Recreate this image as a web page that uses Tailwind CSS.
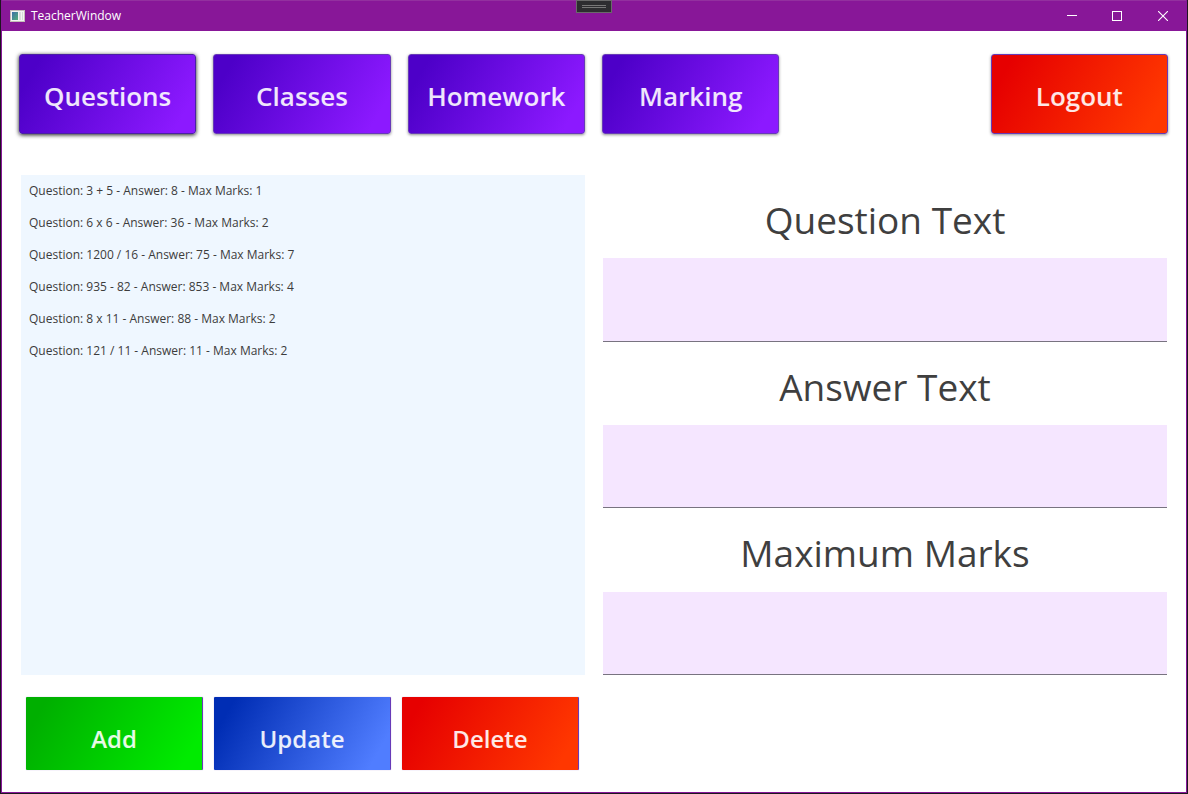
<!DOCTYPE html>
<html lang="en">
<head>
<meta charset="utf-8">
<title>TeacherWindow</title>
<script src="https://cdn.jsdelivr.net/npm/@tailwindcss/browser@4"></script>
</head>
<body class="bg-[#1e1420] font-['Segoe_UI','Open_Sans',sans-serif]">
<div class="flex min-h-screen flex-col px-px pb-px">
  <div class="flex flex-1 flex-col border-x border-b border-[#881798] bg-white">
    <header class="relative flex h-[31px] items-center border-t border-[#93309f] bg-[#881798] pl-2 text-white">
      <svg class="mr-[6px] shrink-0" width="15" height="12" viewBox="0 0 15 12" aria-hidden="true">
        <defs><linearGradient id="pane" x1="0" y1="0" x2="1" y2="1"><stop offset="0" stop-color="#3c6fa8"/><stop offset="1" stop-color="#55b07a"/></linearGradient></defs>
        <rect width="15" height="12" fill="#f4f4f4"/>
        <rect x="0.5" y="0.5" width="14" height="11" fill="none" stroke="#c4beb8"/>
        <rect x="2" y="2" width="6" height="8" fill="url(#pane)"/>
        <rect x="9" y="2" width="2" height="8" fill="#dcdcdc"/>
        <rect x="12" y="2" width="1" height="8" fill="#d4dcd4"/>
      </svg>
      <h1 class="flex-1 text-xs">TeacherWindow</h1>
      <button type="button" aria-label="Debug toolbar" class="absolute left-1/2 -top-px flex h-[13px] w-9 -translate-x-1/2 flex-col items-center justify-center gap-px border border-[#6a6a6a] bg-[#2d2d30]">
        <span class="h-px w-6 bg-[#777]"></span>
        <span class="h-px w-6 bg-[#777]"></span>
      </button>
      <button type="button" aria-label="Minimize" class="flex h-full w-[45px] items-center justify-center">
        <svg width="10" height="10" viewBox="0 0 10 10"><path d="M0 4.5H10" stroke="#fff"/></svg>
      </button>
      <button type="button" aria-label="Maximize" class="flex h-full w-[46px] items-center justify-center">
        <svg width="10" height="10" viewBox="0 0 10 10"><rect x="0.5" y="0.5" width="9" height="9" fill="none" stroke="#fff"/></svg>
      </button>
      <button type="button" aria-label="Close" class="flex h-full w-[46px] items-center justify-center">
        <svg width="10" height="10" viewBox="0 0 10 10"><path d="M0 0L10 10M10 0L0 10" stroke="#fff" stroke-width="1.1"/></svg>
      </button>
    </header>

    <main class="flex flex-1 flex-col px-[18px] pt-[23px] pb-[22px]">
      <nav class="grid grid-cols-6 gap-[17px] -ml-px text-[26px] font-semibold text-white/90">
        <button type="button" class="h-20 rounded-[3px] border border-[#4a1fa5] bg-linear-[120deg,#4d00c8_10%,#8c19ff_90%] pt-1 shadow-[0_1px_4px_rgba(0,0,0,0.9)]">Questions</button>
        <button type="button" class="h-20 rounded-[3px] border border-[#673ab7] bg-linear-[120deg,#4d00c8_10%,#8c19ff_90%] pt-1 shadow-[0_1px_3px_rgba(0,0,0,0.45)]">Classes</button>
        <button type="button" class="h-20 rounded-[3px] border border-[#673ab7] bg-linear-[120deg,#4d00c8_10%,#8c19ff_90%] pt-1 shadow-[0_1px_3px_rgba(0,0,0,0.45)]">Homework</button>
        <button type="button" class="h-20 rounded-[3px] border border-[#673ab7] bg-linear-[120deg,#4d00c8_10%,#8c19ff_90%] pt-1 shadow-[0_1px_3px_rgba(0,0,0,0.45)]">Marking</button>
        <button type="button" class="col-start-6 h-20 rounded-[3px] border border-[#673ab7] bg-linear-[120deg,#e60000_10%,#ff3700_90%] pt-1 shadow-[0_1px_3px_rgba(0,0,0,0.45)]">Logout</button>
      </nav>

      <div class="mt-[41px] grid flex-1 grid-cols-2 gap-[18px] px-px">
        <ul class="bg-[#eff7ff] px-2 text-xs text-[#3c3c3c]">
          <li class="flex h-8 items-center">Question: 3 + 5 - Answer: 8 - Max Marks: 1</li>
          <li class="flex h-8 items-center">Question: 6 x 6 - Answer: 36 - Max Marks: 2</li>
          <li class="flex h-8 items-center">Question: 1200 / 16 - Answer: 75 - Max Marks: 7</li>
          <li class="flex h-8 items-center">Question: 935 - 82 - Answer: 853 - Max Marks: 4</li>
          <li class="flex h-8 items-center">Question: 8 x 11 - Answer: 88 - Max Marks: 2</li>
          <li class="flex h-8 items-center">Question: 121 / 11 - Answer: 11 - Max Marks: 2</li>
        </ul>
        <form class="grid auto-rows-fr text-[37px] text-[#3f3f3f]">
          <label for="question" class="flex items-center justify-center pt-[6px]">Question Text</label>
          <input id="question" type="text" class="min-w-0 border-b border-[#787380] bg-[#f5e6ff] px-2 outline-none">
          <label for="answer" class="flex items-center justify-center pt-[6px]">Answer Text</label>
          <input id="answer" type="text" class="min-w-0 border-b border-[#787380] bg-[#f5e6ff] px-2 outline-none">
          <label for="marks" class="flex items-center justify-center pt-[6px]">Maximum Marks</label>
          <input id="marks" type="text" class="min-w-0 border-b border-[#787380] bg-[#f5e6ff] px-2 outline-none">
        </form>
      </div>

      <div class="mt-[22px] grid grid-cols-2 gap-[18px] px-px">
        <div class="grid grid-cols-3 gap-[11px] pl-[5px] pr-[6px] text-2xl font-semibold text-white/90">
          <button type="button" class="h-[73px] rounded-[1px] border-r border-[#673ab7] bg-linear-[120deg,#00af00_10%,#00eb00_90%] pt-[10px] shadow-[0_0_1px_rgba(103,58,183,0.6)]">Add</button>
          <button type="button" class="h-[73px] rounded-[1px] border-r border-[#673ab7] bg-linear-[120deg,#002db4_10%,#507dff_90%] pt-[10px] shadow-[0_0_1px_rgba(103,58,183,0.6)]">Update</button>
          <button type="button" class="h-[73px] rounded-[1px] border-r border-[#673ab7] bg-linear-[120deg,#e60000_10%,#ff3700_90%] pt-[10px] shadow-[0_0_1px_rgba(103,58,183,0.6)]">Delete</button>
        </div>
      </div>
    </main>
  </div>
</div>
</body>
</html>
